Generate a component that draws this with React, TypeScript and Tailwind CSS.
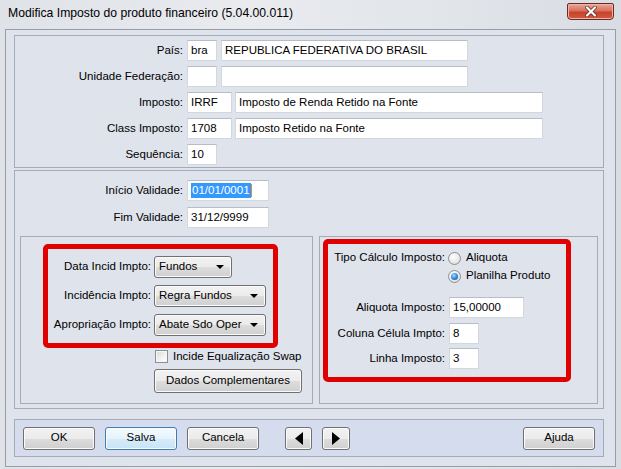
import React from 'react';

const btnBase =
  'h-[23px] rounded-[3px] border flex items-center justify-center text-[11.5px] leading-none text-black shadow-[inset_0_0_0_1px_#fbfbfb]';
const btnGray =
  'border-[#707070] bg-[linear-gradient(#f2f2f2_0%,#ebebeb_50%,#dddddd_51%,#cfcfcf_100%)]';
const btnBlue =
  'border-[#3c7fb1] bg-[linear-gradient(#f4fafe_0%,#e6f3fb_50%,#d6ecf9_51%,#c8e4f5_100%)]';

const Input = ({ className = '', children }: { className?: string; children?: React.ReactNode }) => (
  <div
    className={`h-[21px] shrink-0 bg-white border border-[#d3d7de] border-t-[#b7bcc5] flex items-center pl-[3px] text-[11.5px] leading-none text-black whitespace-nowrap overflow-hidden ${className}`}
  >
    {children}
  </div>
);

const Label = ({ className = '', children }: { className?: string; children: React.ReactNode }) => (
  <div className={`shrink-0 text-right text-[11.5px] leading-none text-black whitespace-nowrap ${className}`}>
    {children}
  </div>
);

const Combo = ({ className = '', value }: { className?: string; value: string }) => (
  <div
    className={`h-[22px] rounded-[3px] border border-[#707070] bg-[linear-gradient(#f2f2f2_0%,#ebebeb_50%,#dddddd_51%,#cfcfcf_100%)] shadow-[inset_0_0_0_1px_#fbfbfb] flex items-center justify-between pl-[4px] pr-[7px] text-[11.5px] leading-none text-black whitespace-nowrap ${className}`}
  >
    <span>{value}</span>
    <svg width="8" height="4" viewBox="0 0 8 4">
      <polygon points="0,0 8,0 4,4" fill="#000" />
    </svg>
  </div>
);

const Radio = ({ checked }: { checked?: boolean }) => (
  <div className="w-[13px] h-[13px] shrink-0 rounded-full border border-[#8e8f8f] bg-[radial-gradient(circle_at_40%_35%,#ffffff_0%,#e9e9e9_55%,#cfcfcf_100%)] flex items-center justify-center">
    {checked && (
      <div className="w-[7px] h-[7px] rounded-full bg-[radial-gradient(circle_at_40%_35%,#a8dcff_0%,#2f8de0_50%,#0d4f99_100%)]" />
    )}
  </div>
);

export default function App() {
  return (
    <div className="w-[621px] h-[469px] overflow-hidden bg-[linear-gradient(90deg,#dfe2e7_0%,#e9ebef_40%,#e2e5ea_70%,#d9dde3_100%)] [font-family:'Liberation_Sans',Arial,sans-serif]">
      {/* title bar */}
      <div className="h-[29px] flex items-start justify-between">
        <div className="pl-[8px] pt-[7px] text-[12.2px] leading-none text-black">
          Modifica Imposto do produto financeiro (5.04.00.011)
        </div>
        <div className="mt-[3px] mr-[7px] w-[47px] h-[17px] rounded-b-[4px] rounded-t-[2px] border border-[#6b2a21] bg-[linear-gradient(#e9a99a_0%,#d8705c_45%,#c7432b_55%,#d45a3f_100%)] shadow-[inset_0_0_0_1px_#f0b4a6] flex items-center justify-center">
          <svg width="12" height="11" viewBox="0 0 12 11">
            <path d="M2 1.5 L10 9.5 M10 1.5 L2 9.5" stroke="#5a2a22" strokeWidth="3.6" strokeLinecap="round" />
            <path d="M2 1.5 L10 9.5 M10 1.5 L2 9.5" stroke="#ffffff" strokeWidth="2.2" strokeLinecap="round" />
          </svg>
        </div>
      </div>

      {/* client area */}
      <div className="ml-[5px] w-[611px] h-[438px] border border-[#979da6] bg-[#dfe3ec] pl-[8px] pt-[5px]">
        {/* top panel */}
        <div className="w-[590px] h-[133px] border border-[#a3abb8] pt-[4px] flex flex-col gap-[5px]">
          <div className="flex items-center">
            <Label className="w-[168px]">País:</Label>
            <Input className="ml-[4px] w-[30px]">bra</Input>
            <Input className="ml-[4px] w-[247px]">REPUBLICA FEDERATIVA DO BRASIL</Input>
          </div>
          <div className="flex items-center">
            <Label className="w-[168px]">Unidade Federação:</Label>
            <Input className="ml-[4px] w-[30px]" />
            <Input className="ml-[4px] w-[247px]" />
          </div>
          <div className="flex items-center">
            <Label className="w-[168px]">Imposto:</Label>
            <Input className="ml-[4px] w-[45px]">IRRF</Input>
            <Input className="ml-[3px] w-[308px]">Imposto de Renda Retido na Fonte</Input>
          </div>
          <div className="flex items-center">
            <Label className="w-[168px]">Class Imposto:</Label>
            <Input className="ml-[4px] w-[45px]">1708</Input>
            <Input className="ml-[3px] w-[308px]">Imposto Retido na Fonte</Input>
          </div>
          <div className="flex items-center">
            <Label className="w-[168px]">Sequência:</Label>
            <Input className="ml-[4px] w-[30px]">10</Input>
          </div>
        </div>

        {/* middle panel */}
        <div className="mt-[2px] w-[590px] h-[239px] border border-[#a3abb8] pt-[9px]">
          <div className="flex items-center">
            <Label className="w-[168px]">Início Validade:</Label>
            <Input className="ml-[4px] w-[82px] border-[#5a9ad6]">
              <span className="bg-[#3399ff] text-white px-px py-[2px]">01/01/0001</span>
              <span className="w-px h-[13px] bg-[#e08a2a]" />
            </Input>
          </div>
          <div className="flex items-center mt-[6px]">
            <Label className="w-[168px]">Fim Validade:</Label>
            <Input className="ml-[4px] w-[82px]">31/12/9999</Input>
          </div>

          <div className="mt-[8px] pl-[5px] flex gap-[6px]">
            {/* left group */}
            <div className="w-[293px] h-[168px] border border-[#a3abb8] pt-[7px]">
              <div className="ml-[22px] w-[235px] h-[104px] border-[5px] border-[#e10000] rounded-[5px] pt-[7px] flex flex-col gap-[7px]">
                <div className="flex items-center">
                  <Label className="w-[103px]">Data Incid Impto:</Label>
                  <Combo className="ml-[3px] w-[78px]" value="Fundos" />
                </div>
                <div className="flex items-center">
                  <Label className="w-[103px]">Incidência Impto:</Label>
                  <Combo className="ml-[3px] w-[112px]" value="Regra Fundos" />
                </div>
                <div className="flex items-center">
                  <Label className="w-[103px]">Apropriação Impto:</Label>
                  <Combo className="ml-[3px] w-[112px]" value="Abate Sdo Oper" />
                </div>
              </div>
              <div className="mt-[2px] ml-[134px] flex items-center gap-[5px]">
                <div className="w-[13px] h-[13px] border border-[#8e8f8f] bg-[linear-gradient(135deg,#d6d6d6_0%,#f4f4f4_60%,#ffffff_100%)] shadow-[inset_0_0_0_1px_#f6f6f6]" />
                <span className="text-[11.5px] leading-none text-black">Incide Equalização Swap</span>
              </div>
              <div className={`${btnBase} ${btnGray} mt-[6px] ml-[133px] w-[148px] h-[24px]`}>Dados Complementares</div>
            </div>

            {/* right group */}
            <div className="w-[279px] h-[168px] border border-[#a3abb8] pt-[2px]">
              <div className="ml-[3px] w-[248px] h-[143px] border-[5px] border-[#e10000] rounded-[5px] pt-[7px]">
                <div className="flex items-center h-[14px]">
                  <Label className="w-[117px]">Tipo Cálculo Imposto:</Label>
                  <div className="ml-[3px]">
                    <Radio />
                  </div>
                  <span className="ml-[5px] text-[11.5px] leading-none text-black">Aliquota</span>
                </div>
                <div className="flex items-center h-[14px] mt-[4px]">
                  <div className="ml-[120px]">
                    <Radio checked />
                  </div>
                  <span className="ml-[5px] text-[11.5px] leading-none text-black">Planilha Produto</span>
                </div>
                <div className="flex items-center mt-[14px]">
                  <Label className="w-[117px]">Aliquota Imposto:</Label>
                  <Input className="ml-[4px] w-[75px]">15,00000</Input>
                </div>
                <div className="flex items-center mt-[5px]">
                  <Label className="w-[117px]">Coluna Célula Impto:</Label>
                  <Input className="ml-[4px] w-[30px]">8</Input>
                </div>
                <div className="flex items-center mt-[4px]">
                  <Label className="w-[117px]">Linha Imposto:</Label>
                  <Input className="ml-[4px] w-[30px]">3</Input>
                </div>
              </div>
            </div>
          </div>
        </div>

        {/* button bar */}
        <div className="mt-[10px] w-[590px] h-[38px] border border-[#a3abb8] bg-[#d5dcee] flex items-center pl-[8px] pr-[8px]">
          <div className={`${btnBase} ${btnGray} w-[72px]`}>OK</div>
          <div className={`${btnBase} ${btnBlue} w-[72px] ml-[10px]`}>Salva</div>
          <div className={`${btnBase} ${btnGray} w-[72px] ml-[10px]`}>Cancela</div>
          <div className={`${btnBase} ${btnGray} w-[27px] ml-[26px]`}>
            <svg width="8" height="13" viewBox="0 0 8 13">
              <polygon points="8,0 8,13 0,6.5" fill="#000" />
            </svg>
          </div>
          <div className={`${btnBase} ${btnGray} w-[28px] ml-[10px]`}>
            <svg width="8" height="13" viewBox="0 0 8 13">
              <polygon points="0,0 0,13 8,6.5" fill="#000" />
            </svg>
          </div>
          <div className={`${btnBase} ${btnGray} w-[72px] ml-auto`}>Ajuda</div>
        </div>
      </div>
    </div>
  );
}
